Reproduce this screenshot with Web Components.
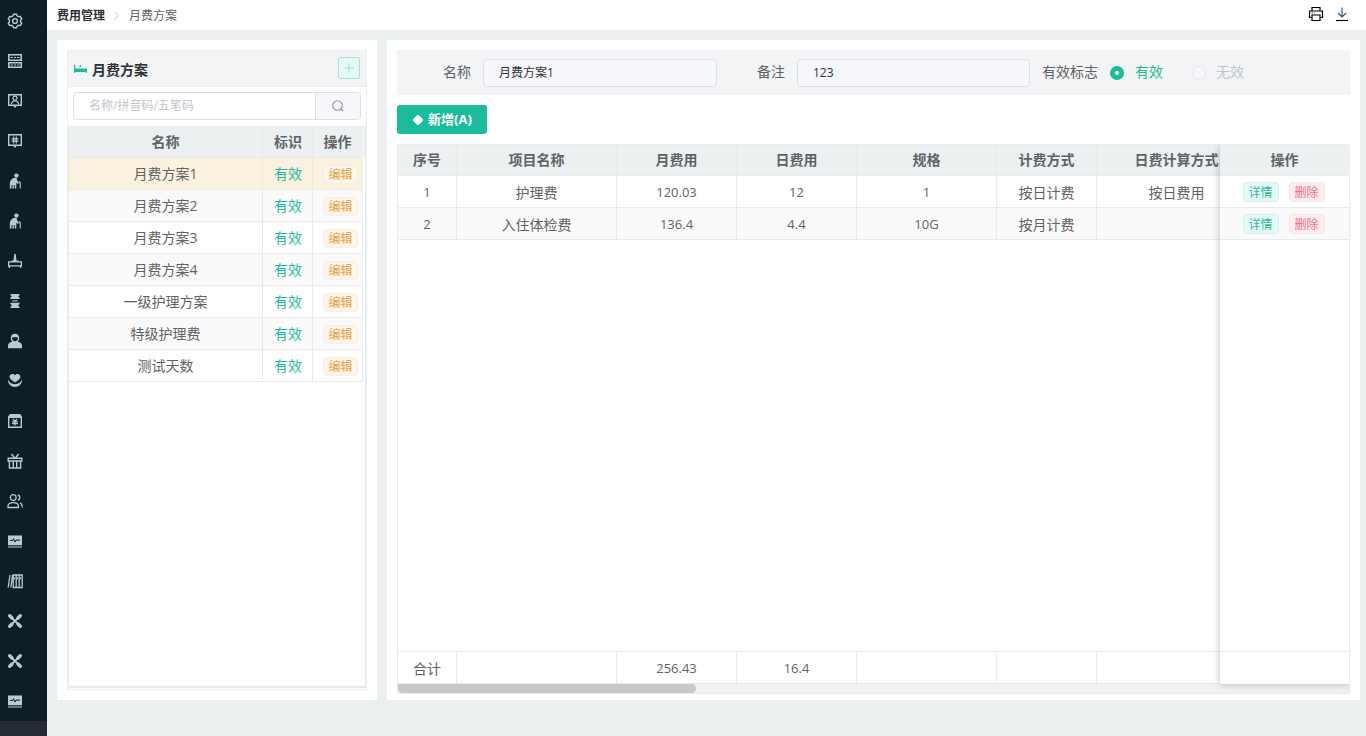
<!DOCTYPE html>
<html lang="zh-CN"><head><meta charset="utf-8"><title>月费方案</title>
<style>
html,body{margin:0;height:100%;overflow:hidden}
body{font:14px "Open Sans","Noto Sans CJK SC",sans-serif;color:#606266;background:#ebeff0}
</style></head><body>
<app-shell>
  <side-bar slot="side"></side-bar>
  <top-bar slot="top"></top-bar>
  <plan-panel slot="left"></plan-panel>
  <fee-panel slot="right"></fee-panel>
</app-shell>
<script>
const define=(name,css,html,init)=>customElements.define(name,class extends HTMLElement{
  constructor(){super();this.attachShadow({mode:'open'});
    this.shadowRoot.innerHTML=`<style>${css}</style>${html}`;}
  connectedCallback(){init&&init(this)}
});
define('app-shell',`
:host{display:flex;height:736px;width:1366px}
.main{flex:1;display:flex;flex-direction:column;min-width:0}
.body{display:flex;gap:10px;padding:10px 6px 0 10px;height:660px}
`,`<slot name="side"></slot><div class="main"><slot name="top"></slot><div class="body"><slot name="left"></slot><slot name="right"></slot></div></div>`);

const I={
gear:`<g fill="none" stroke="currentColor" stroke-width="1.400"><path d="M6.600 1.200h2.800l.6 1.600 1.600.9 1.700-.3 1.400 2.400-1.100 1.300v1.800l1.100 1.300-1.400 2.400-1.700-.3-1.600.9-.6 1.600H6.600L6 13.200l-1.600-.9-1.700.3-1.400-2.400 1.100-1.300V7.100L1.300 5.800l1.400-2.400 1.700.3L6 2.800z"/><circle cx="8" cy="8" r="2.400"/></g>`,
server:`<path fill="currentColor" fill-rule="evenodd" d="M1 1h14v7H1zM2.500 2.500v4h11v-4zM1 9h14v6H1zM2.500 10.400v3.200h11v-3.200z"/><path fill="currentColor" d="M3.500 4h2.500v1H3.500zM7 4h2v1H7zM10 4h2.500v1H10zM3.500 11.500h2.500v1H3.500zM7 11.500h2v1H7zM10 11.500h2.500v1H10z"/>`,
monP:`<path fill="currentColor" fill-rule="evenodd" d="M1 1h14v12H9.600L8 15l-1.600-2H1zM2.400 2.400v9.200h11.200V2.400z"/><circle cx="8" cy="5.200" r="2" fill="none" stroke="currentColor" stroke-width="1.200"/><path fill="none" stroke="currentColor" stroke-width="1.200" d="M4.400 11.400c.3-2.400 1.600-3.600 3.600-3.600s3.300 1.200 3.600 3.600"/>`,
monH:`<path fill="currentColor" fill-rule="evenodd" d="M1 1h14v12H9.600L8 15l-1.600-2H1zM2.400 2.400v9.200h11.200V2.400z"/><path fill="none" stroke="currentColor" stroke-width="1.200" d="M6.700 3.600v7M9.300 3.600v7M4.600 5.800h6.800M4.600 8.200h6.800"/>`,
old:`<circle cx="9.400" cy="2.600" r="2.200" fill="currentColor"/><path fill="currentColor" d="M8.400 4.700C4.600 4.800 2.800 7.800 2.800 11.200v4.300h1.700V12h.9v3.500h1.400V12h.9v3.500h1.600V9.800l1.800 1.100.8-1-2-2.800C10.100 5.900 9.700 4.600 8.400 4.700z"/><path fill="none" stroke="currentColor" stroke-width="1.100" d="M11.800 9c.8-.3 1.300 0 1.400.7v5.800"/>`,
tool:`<path fill="currentColor" d="M7.300 1h1.400l.8 6.400h2v1.400H4.500V7.400h2z"/><path fill="none" stroke="currentColor" stroke-width="1.300" d="M1.600 8.800h12.800v4H1.600zM2.400 12.800V15M13.600 12.800V15"/>`,
vase:`<path fill="currentColor" d="M3.500 1h9v1.200l-1.500 1.100c1.100.7 1.700 1.700 1.800 2.700H3.200c.1-1 .7-2 1.800-2.700L3.500 2.200z"/><path fill="currentColor" d="M5.300 7.400h5.400v1H5.300z"/><path fill="currentColor" d="M3.200 9.800h9.600c-.1 1-.7 2-1.800 2.700l1.500 1.200V15h-9v-1.300L5 12.500c-1.100-.7-1.700-1.700-1.800-2.700z"/>`,
bust:`<path fill="currentColor" fill-rule="evenodd" d="M8 .8c2.700 0 4.200 1.800 4.200 4.300 0 1.500-.5 2.800-1.400 3.700 2.500.5 4.200 1.800 4.200 3.700v2.700H1v-2.700c0-1.900 1.700-3.200 4.200-3.700-.9-.9-1.400-2.200-1.400-3.700C3.800 2.600 5.300.8 8 .8zM5.200 4.200v1.600c0 1.300 1.200 2.400 2.800 2.400s2.800-1.100 2.800-2.400V4.200z"/>`,
heart:`<path fill="currentColor" d="M5.500 1c1.100 0 1.900.5 2.500 1.400C8.600 1.500 9.400 1 10.500 1c1.800 0 2.900 1.300 2.900 2.800 0 1.100-.6 2-1.700 3L8 9.600 4.300 6.800C3.200 5.800 2.600 4.900 2.600 3.800 2.600 2.300 3.700 1 5.500 1z"/><path fill="currentColor" d="M1 6.500c1.100 2.900 3.600 4.700 7 4.700s5.900-1.800 7-4.700c.3 4.200-3 7.500-7 7.500s-7.300-3.300-7-7.500z"/>`,
box:`<path fill="currentColor" fill-rule="evenodd" d="M3 1h10l2 2.500V15H1V3.500zM2.400 5v8.600h11.200V5z"/><path fill="currentColor" d="M2 2h12v3H2z" opacity=".7"/><path fill="none" stroke="currentColor" stroke-width="1.300" d="M5.800 5.800 8 8.400l2.200-2.600M5 8.800h6M5 10.700h6M8 8.400v4"/>`,
gift:`<g fill="none" stroke="currentColor" stroke-width="1.400"><path d="M1.200 5.200h13.600v2.800H1.200zM2.400 8v7h11.200V8zM6.300 8v7M9.700 8v7M4.500 1 7.500 5M11.500 1 8.500 5"/></g>`,
users:`<g fill="none" stroke="currentColor" stroke-width="1.300"><circle cx="6.200" cy="4.600" r="2.900"/><path d="M1 14.500v-1.300C1 10.800 3 9.700 6.200 9.700s5.200 1.100 5.200 3.500v1.300zM10.800 2c1.200.3 2 1.300 2 2.600s-.8 2.300-2 2.600M13 9.900c1.300.6 2.200 1.700 2.200 3.300v1.300"/></g>`,
pulse:`<path fill="currentColor" d="M1 2.500h14v9.800H1zM1 13.500h14v1H1z"/><path fill="none" stroke="#0f1e25" stroke-width="1" d="M3 7.500h2.500l1-1.800 1.500 3.400 1-2h4"/>`,
books:`<g fill="none" stroke="currentColor" stroke-width="1.300"><path d="M3 2 1.200 14.500M5.600 2 3.800 14.500M6.200 2h9v12.500H6.200zM9.200 2v12.500M12.200 2v12.500"/></g><path fill="currentColor" d="M7.200 4h1v2.500h-1zM10.200 4h1v2.500h-1zM13.200 4h1v2.500h-1z"/>`,
cross:`<g fill="none" stroke="currentColor" stroke-linecap="round"><path stroke-width="1.800" d="M3 3l10 10M13 3 3 13"/><path stroke-width="3.400" d="M2.700 2.700l2.300 2.300M13.300 2.700 11 5M2.700 13.300 5 11M13.300 13.300 11 11"/></g>`
};
define('side-icon',`:host{display:flex;height:40px;align-items:center;padding-left:7px;color:#b7cbd6}svg{width:16px;height:16px;display:block}`,`<svg viewBox="0 0 16 16"></svg>`,
 el=>{el.shadowRoot.querySelector('svg').innerHTML=I[el.getAttribute('name')]||''});
define('side-bar',`
:host{display:flex;flex-direction:column;width:47px;flex:none;background:#0f1e25;height:736px}
.list{flex:1;padding-top:1px}
.foot{height:16px;background:#222c32}
`,`<div class="list">${['gear','server','monP','monH','old','old','tool','vase','bust','heart','box','gift','users','pulse','books','cross','cross','pulse'].map(n=>`<side-icon name="${n}"></side-icon>`).join('')}</div><div class="foot"></div>`);

define('top-bar',`
:host{display:flex;align-items:center;height:30px;background:#fff;padding:0 17px 0 10px;font-size:12px;flex:none}
b{color:#303133;font-weight:700}
.sep{margin:0 8px 0 7px;width:9px;height:9px;color:#c0c4cc}
.cur{color:#606266}
.sp{flex:1}
.act{display:flex;gap:11px;color:#000;margin-top:-2px}
svg{display:block}
`,`<b>费用管理</b><svg class="sep" viewBox="0 0 9 9"><path d="M2.500.5 6.500 4.500 2.500 8.500" fill="none" stroke="currentColor"/></svg><span class="cur">月费方案</span><span class="sp"></span>
<div class="act"><svg width="16" height="16" viewBox="0 0 16 16" fill="none" stroke="#000" stroke-width="1.200"><path d="M4 5V1.500h8V5M4 11.500H1.500V5h13v6.500H12"/><path d="M4 9h8v5.500H4z"/><path d="M3.500 7h1.500M6 7h.8" stroke="#70c"/></svg><svg width="14" height="16" viewBox="0 0 14 16" fill="none" stroke="#1d4f8f" stroke-width="1.100"><path d="M7 1.500v9M3 7l4 4 4-4"/><path d="M1 14.500h12" stroke="#000"/></svg></div>`);

define('ui-tag',`
:host{display:inline-flex;align-items:center;justify-content:center;box-sizing:border-box;height:20px;width:36px;border-radius:4px;border:1px solid;font-size:12px;line-height:16px;padding-top:1px}
:host([tone=warn]){background:#fdf6ec;border-color:#faecd8;color:#e6a23c}
:host([tone=ok]){background:#e8f8f5;border-color:#d1f2eb;color:#1abc9c}
:host([tone=del]){background:#ffeef0;border-color:#fde2e6;color:#f56c7c}
`,`<slot></slot>`);

define('plan-panel',`
:host{display:block;width:320px;box-sizing:border-box;background:#fff;padding:10px;flex:none;height:660px}
.frame{height:640px;box-sizing:border-box;border:1px solid #ebeef0;display:flex;flex-direction:column}
.head{height:36px;flex:none;background:#f2f4f5;display:flex;align-items:center;padding:0 6px;border-bottom:1px solid #ebeef0;box-sizing:border-box}
.head svg.bed{width:13px;height:13px;margin-right:5px}
.head b{flex:1;font-size:14px;color:#303133}
.add{width:22px;height:22px;box-sizing:border-box;border:1px solid #a3e4d7;border-radius:2px;background:#e8f8f5;display:flex;align-items:center;justify-content:center;margin-top:-1px}
.search{display:flex;height:28px;margin:5px 5px 6px;box-sizing:border-box;border:1px solid #dcdfe6;border-radius:4px;flex:none;font-size:12px;color:#c0c4cc;background:#fff}
.search span{flex:1;padding-left:15px;line-height:26px}
.search i{width:45px;box-sizing:border-box;background:#f5f7fa;border-left:1px solid #dcdfe6;display:flex;align-items:center;justify-content:center;border-radius:0 3px 3px 0}
.tb{flex:1;margin:0 0 1px;border:1px solid #e8eaec;border-bottom-width:2px;position:relative;display:flex;flex-direction:column;min-height:0}
.r{display:grid;grid-template-columns:194px 50px 50px;height:32px;box-sizing:border-box}
.r.h{height:31px}
.c{display:flex;align-items:center;justify-content:center;border-right:1px solid #e8eaec;border-bottom:1px solid #e8eaec;box-sizing:border-box;min-width:0;padding-bottom:2px}
.c.m{padding-left:1px}
.c.t{padding:2px 0 0 6px}
.c.t ui-tag{height:19px;width:35px}
.h .c{background:#ecf0f1;font-weight:700;color:#5f6368}
.ok{color:#1abc9c}
.r:nth-child(odd):not(.h) .c{background:#fafafa}
.r.on .c{background:#faf2de!important}
.gut{position:absolute;top:0;right:0;width:3px;height:31px;background:#f2f2f2}
`,`<div class="frame">
<div class="head"><svg class="bed" viewBox="0 0 13 13"><path fill="#1abc9c" d="M0 2.500h1.200v4h11.800V11h-1.200V10H1.200v1H0z"/><path fill="#1abc9c" d="M5.500 3.200h1.600v1.800H5.500z"/></svg><b>月费方案</b><div class="add"><svg width="12" height="12" viewBox="0 0 12 12"><path d="M6 1v10M1 6h10" stroke="#a3e4d7" stroke-width="1.200"/></svg></div></div>
<div class="search"><span>名称/拼音码/五笔码</span><i><svg width="14" height="14" viewBox="0 0 14 14" fill="none" stroke="#909399" stroke-width="1.100"><circle cx="6.500" cy="6.500" r="4.800"/><path d="M10 10l2 2"/></svg></i></div>
<div class="tb"><div class="gut"></div><div class="rows"></div></div></div>`,
el=>{const names=['月费方案1','月费方案2','月费方案3','月费方案4','一级护理方案','特级护理费','测试天数'];
 el.shadowRoot.querySelector('.rows').innerHTML=`<div class="r h"><div class="c">名称</div><div class="c m">标识</div><div class="c">操作</div></div>`+
 names.map((n,i)=>`<div class="r ${i==0?'on':''}"><div class="c">${n}</div><div class="c m ok">有效</div><div class="c t"><ui-tag tone="warn">编辑</ui-tag></div></div>`).join('');});

define('form-bar',`
:host{display:flex;align-items:center;height:45px;background:#f2f4f5;flex:none;font-size:14px;color:#606266}
label,span{padding-bottom:3px}
label{width:86px;text-align:right;padding-right:12px;box-sizing:border-box}
.in{height:28px;box-sizing:border-box;border:1px solid #dcdfe6;border-radius:4px;background:#f5f7fa;font-size:12px;line-height:26px;padding-left:15px;color:#303133}
.rd{display:flex;align-items:center;margin-left:12px}
.rd i{width:14px;height:14px;border-radius:50%;box-sizing:border-box;margin-right:11px}
.rd.on i{background:#1abc9c;display:flex;align-items:center;justify-content:center}
.rd.on i::after{content:"";width:4px;height:4px;border-radius:50%;background:#fff}
.rd.on{color:#1abc9c}
.rd.off i{background:#f5f7fa;border:1px solid #e4e7ed;margin-right:10px}
.rd.off{color:#c0c4cc;margin-left:29px}
`,`<label>名称</label><div class="in" style="width:234px">月费方案1</div><label style="width:80px">备注</label><div class="in" style="width:233px">123</div><span style="margin-left:12px">有效标志</span><div class="rd on"><i></i><span>有效</span></div><div class="rd off"><i></i><span>无效</span></div>`);

define('fee-table',`
:host{display:block;position:relative;flex:1;min-height:0;box-sizing:border-box;border:1px solid #e8eaec;overflow:hidden}
.wrap{display:flex;flex-direction:column;height:100%}
.r{display:grid;grid-template-columns:59px 160px 120px 120px 140px 100px 160px 1fr;height:32px;box-sizing:border-box;flex:none}
.r.h{height:31px}
.c{display:flex;align-items:center;justify-content:center;border-right:1px solid #e8eaec;border-bottom:1px solid #e8eaec;box-sizing:border-box;min-width:0;white-space:nowrap}
.h .c{background:#ecf0f1;font-weight:700;color:#5f6368;padding-bottom:2px}
.n{font-size:13px}
.even .c{background:#fafafa}
.sp{flex:1;min-height:0;border-bottom:1px solid #e8eaec}
.bar{height:9px;background:#f2f2f2;flex:none;position:relative}
.thumb{width:298px;height:9px;background:#c8c8c8;border-radius:0 5px 5px 5px;display:block}
.fix{position:absolute;top:0;right:0;bottom:9px;width:129px;background:#fff;box-shadow:0 0 8px rgba(0,0,0,.25);display:flex;flex-direction:column}
.fix .q{height:32px;box-sizing:border-box;border-bottom:1px solid #e8eaec;display:flex;align-items:center;justify-content:center;gap:10px;flex:none;padding:1px 2px 0 0}
.fix .q.th{height:31px;background:#ecf0f1;font-weight:700;color:#5f6368;padding:0 0 2px}
.fix .q.even{background:#fafafa}
.fix .bl{flex:1;border-bottom:1px solid #e8eaec}
.fix .ft{height:32px;flex:none}
`,`<div class="wrap"><div class="rows" style="display:contents"></div><div class="sp"></div><div class="foot" style="display:contents"></div><div class="bar"><span class="thumb"></span></div></div>
<div class="fix"><div class="q th">操作</div>
<div class="q"><ui-tag tone="ok">详情</ui-tag><ui-tag tone="del">删除</ui-tag></div>
<div class="q even"><ui-tag tone="ok">详情</ui-tag><ui-tag tone="del">删除</ui-tag></div>
<div class="bl"></div><div class="ft"></div></div>`,
el=>{const row=(a,cl='')=>`<div class="r ${cl}">`+a.map(t=>`<div class="c ${/^[\d.G]+$/.test(t)?'n':''}">${t}</div>`).join('')+`</div>`;
 el.shadowRoot.querySelector('.rows').innerHTML=
 row(['序号','项目名称','月费用','日费用','规格','计费方式','日费计算方式',''],'h')+
 row(['1','护理费','120.03','12','1','按日计费','按日费用',''])+
 row(['2','入住体检费','136.4','4.4','10G','按月计费','',''],'even');
 el.shadowRoot.querySelector('.foot').innerHTML=row(['合计','','256.43','16.4','','','','']);});

define('fee-panel',`
:host{display:flex;flex-direction:column;flex:1;min-width:0;box-sizing:border-box;background:#fff;padding:10px 10px 6px;height:660px}
.btn{display:inline-flex;align-items:center;justify-content:center;gap:6px;width:90px;height:29px;box-sizing:border-box;margin:10px 0;background:#1abc9c;color:#fff;border-radius:3px;font-size:13px;font-weight:700;flex:none;padding:0 0 2px 2px}
.btn i{width:8px;height:8px;background:#fff;transform:rotate(45deg);border-radius:2px;margin-top:2px}
`,`<form-bar></form-bar><div class="btn"><i></i>新增(A)</div><fee-table></fee-table>`);
</script>
</body></html>
